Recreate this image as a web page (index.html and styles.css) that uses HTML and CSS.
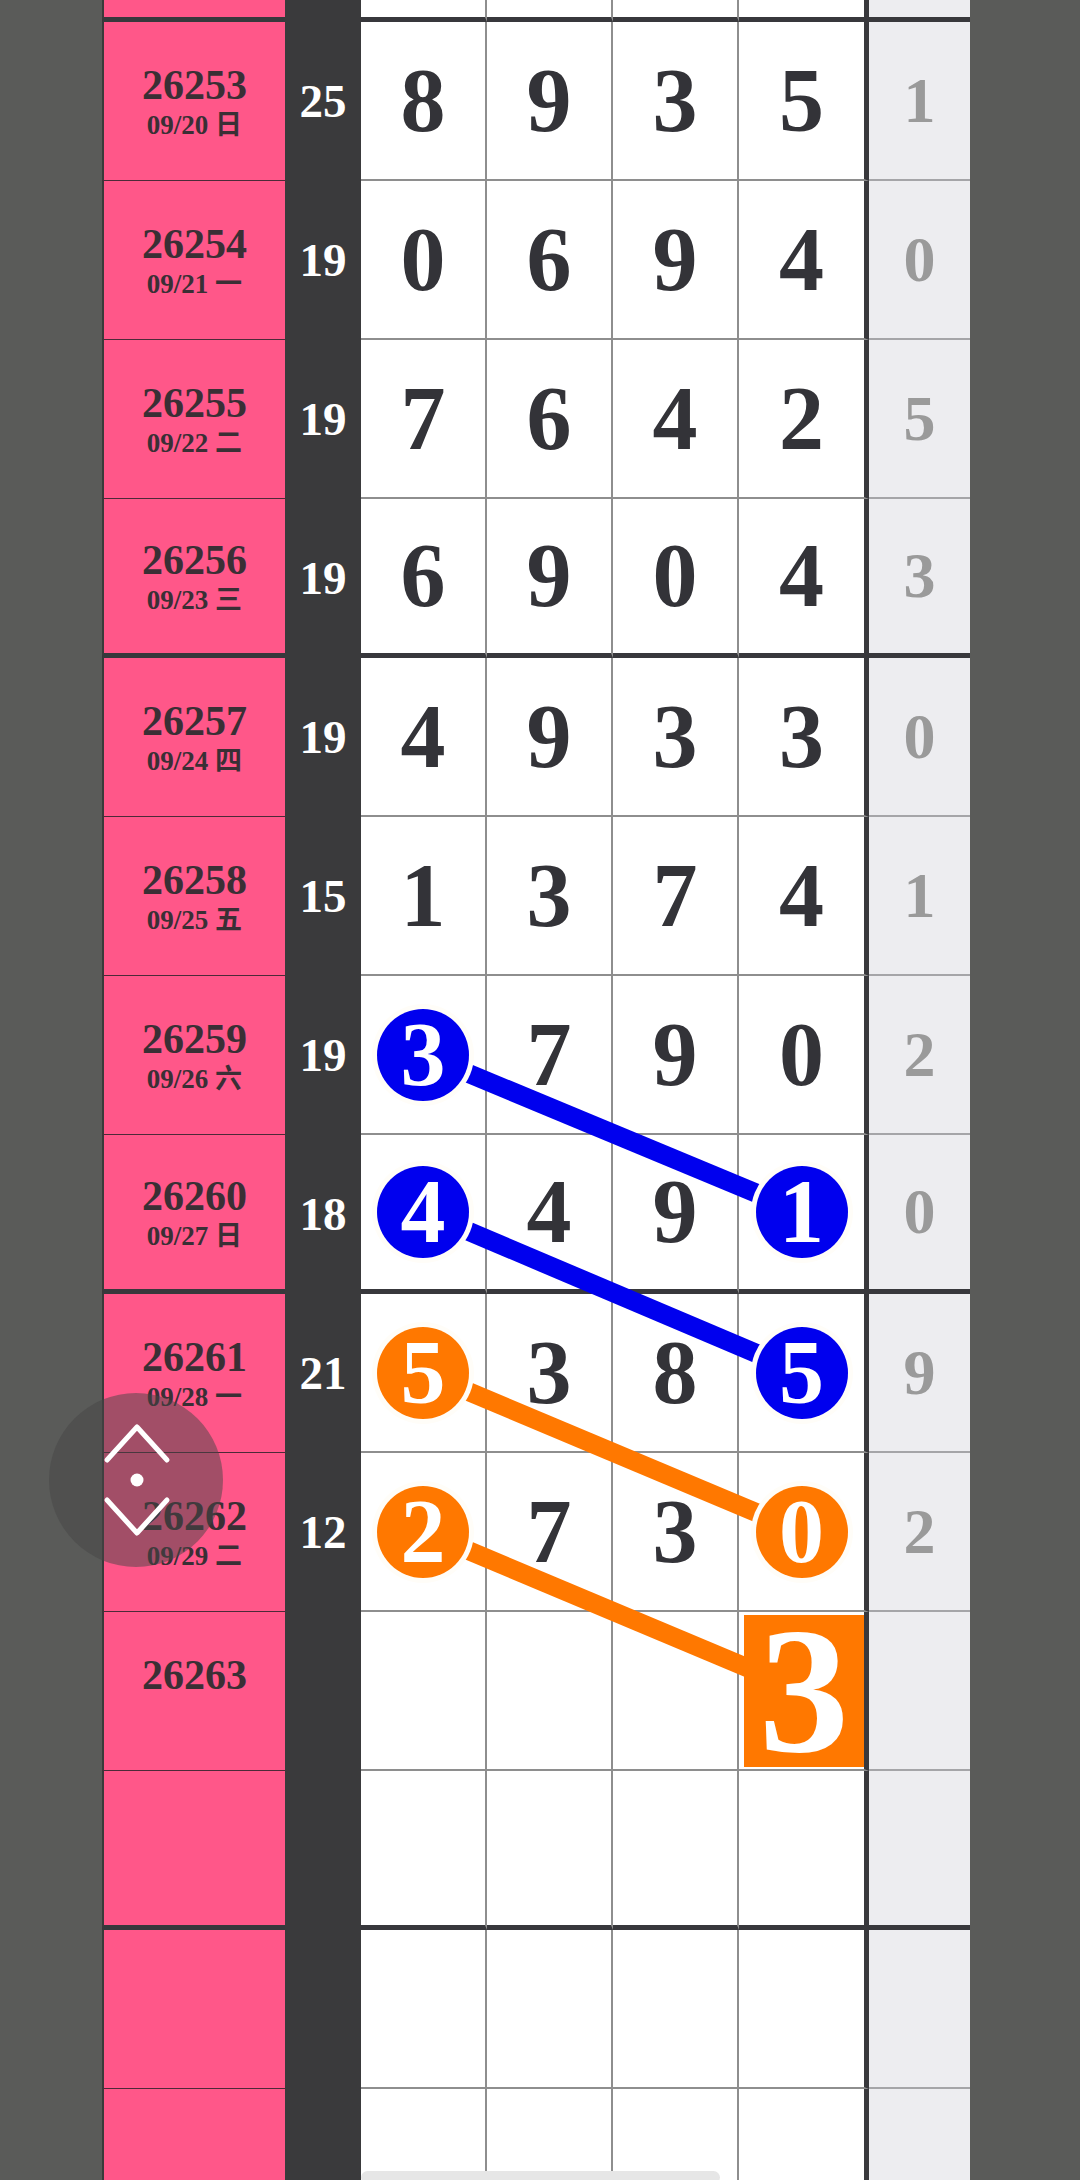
FILE: index.html
```html
<!DOCTYPE html>
<html lang="zh">
<head>
    <meta charset="UTF-8">
    <meta name="viewport" content="width=device-width, initial-scale=1.0">
    <title>走勢表</title>
    <link rel="stylesheet" href="styles.css">
</head>
<body>

<div class="board">
    <div class="row stub end">
        <div class="issue"></div><div class="sum"></div>
        <div class="num"></div><div class="num"></div><div class="num"></div><div class="num"></div>
        <div class="tail"></div>
    </div>

    <div class="row">
        <div class="issue"><b>26253</b><span>09/20 日</span></div><div class="sum">25</div>
        <div class="num">8</div><div class="num">9</div><div class="num">3</div><div class="num">5</div>
        <div class="tail">1</div>
    </div>
    <div class="row">
        <div class="issue"><b>26254</b><span>09/21 一</span></div><div class="sum">19</div>
        <div class="num">0</div><div class="num">6</div><div class="num">9</div><div class="num">4</div>
        <div class="tail">0</div>
    </div>
    <div class="row">
        <div class="issue"><b>26255</b><span>09/22 二</span></div><div class="sum">19</div>
        <div class="num">7</div><div class="num">6</div><div class="num">4</div><div class="num">2</div>
        <div class="tail">5</div>
    </div>
    <div class="row end">
        <div class="issue"><b>26256</b><span>09/23 三</span></div><div class="sum">19</div>
        <div class="num">6</div><div class="num">9</div><div class="num">0</div><div class="num">4</div>
        <div class="tail">3</div>
    </div>

    <div class="row">
        <div class="issue"><b>26257</b><span>09/24 四</span></div><div class="sum">19</div>
        <div class="num">4</div><div class="num">9</div><div class="num">3</div><div class="num">3</div>
        <div class="tail">0</div>
    </div>
    <div class="row">
        <div class="issue"><b>26258</b><span>09/25 五</span></div><div class="sum">15</div>
        <div class="num">1</div><div class="num">3</div><div class="num">7</div><div class="num">4</div>
        <div class="tail">1</div>
    </div>
    <div class="row">
        <div class="issue"><b>26259</b><span>09/26 六</span></div><div class="sum">19</div>
        <div class="num"><span class="ball blue">3</span></div><div class="num">7</div><div class="num">9</div><div class="num">0</div>
        <div class="tail">2</div>
    </div>
    <div class="row end">
        <div class="issue"><b>26260</b><span>09/27 日</span></div><div class="sum">18</div>
        <div class="num"><span class="ball blue">4</span></div><div class="num">4</div><div class="num">9</div><div class="num"><span class="ball blue">1</span></div>
        <div class="tail">0</div>
    </div>

    <div class="row">
        <div class="issue"><b>26261</b><span>09/28 一</span></div><div class="sum">21</div>
        <div class="num"><span class="ball orange">5</span></div><div class="num">3</div><div class="num">8</div><div class="num"><span class="ball blue">5</span></div>
        <div class="tail">9</div>
    </div>
    <div class="row">
        <div class="issue"><b>26262</b><span>09/29 二</span></div><div class="sum">12</div>
        <div class="num"><span class="ball orange">2</span></div><div class="num">7</div><div class="num">3</div><div class="num"><span class="ball orange">0</span></div>
        <div class="tail">2</div>
    </div>
    <div class="row">
        <div class="issue"><b>26263</b><span>&nbsp;</span></div><div class="sum"></div>
        <div class="num"></div><div class="num"></div><div class="num"></div><div class="num hit"><span class="square">3</span></div>
        <div class="tail"></div>
    </div>
    <div class="row end">
        <div class="issue"></div><div class="sum"></div>
        <div class="num"></div><div class="num"></div><div class="num"></div><div class="num"></div>
        <div class="tail"></div>
    </div>

    <div class="row">
        <div class="issue"></div><div class="sum"></div>
        <div class="num"></div><div class="num"></div><div class="num"></div><div class="num"></div>
        <div class="tail"></div>
    </div>
    <div class="row">
        <div class="issue"></div><div class="sum"></div>
        <div class="num"></div><div class="num"></div><div class="num"></div><div class="num"></div>
        <div class="tail"></div>
    </div>

    <!-- connecting lines between repeated numbers -->
    <svg class="links" width="868" height="2180" viewBox="0 0 868 2180">
        <line x1="321" y1="1054.5" x2="699.5" y2="1212" stroke="#0000ee" stroke-width="19"/>
        <line x1="321" y1="1212" x2="699.5" y2="1372.5" stroke="#0000ee" stroke-width="19"/>
        <line x1="321" y1="1372.5" x2="699.5" y2="1531.5" stroke="#ff7800" stroke-width="19"/>
        <line x1="321" y1="1531.5" x2="699.5" y2="1690.5" stroke="#ff7800" stroke-width="19"/>
    </svg>
</div>

<div class="jump">
    <svg width="174" height="174" viewBox="0 0 174 174">
        <polyline points="58,67 88,34 118,67" fill="none" stroke="#fff" stroke-width="5" stroke-linecap="round" stroke-linejoin="round"/>
        <circle cx="88" cy="87" r="6.5" fill="#fff"/>
        <polyline points="58,107 88,140 118,107" fill="none" stroke="#fff" stroke-width="5" stroke-linecap="round" stroke-linejoin="round"/>
    </svg>
</div>

<div class="hscroll"></div>

</body>
</html>
```

FILE: styles.css
```css
body {
    margin: 0;
    background-color: #5a5b59;
    font-family: "Liberation Serif", "Noto Sans CJK SC", serif;
}
.board {
    position: relative;
    width: 868px;
    height: 2180px;
    margin-left: 102px;
    overflow: hidden;
}
.row {
    display: grid;
    grid-template-columns: 183px 76px 126px 126px 126px 130px 101px;
    grid-template-rows: 100%;
    height: 159px;
}
.row > div {
    box-sizing: border-box;
    min-height: 0;
}
.row.stub {
    height: 22px;
}
.issue {
    background-color: #ff5789;
    border-left: 2px solid #3a3a3a;
    border-bottom: 1px solid #4d2a38;
    display: flex;
    flex-direction: column;
    align-items: center;
    justify-content: center;
    color: #3a2f35;
    font-weight: bold;
}
.issue b {
    font-size: 42px;
    line-height: 42px;
}
.issue span {
    font-size: 27px;
    line-height: 28px;
    margin-top: 5px;
}
.sum {
    background-color: #3a3a3c;
    color: #fff;
    font-weight: bold;
    font-size: 47px;
    line-height: 1;
    display: flex;
    align-items: center;
    justify-content: center;
}
.num {
    background-color: #fff;
    border-right: 2px solid #8e8e8e;
    border-bottom: 2px solid #8e8e8e;
    display: flex;
    align-items: center;
    justify-content: center;
    color: #333338;
    font-size: 90px;
    font-weight: bold;
    line-height: 1;
}
.row > .num:nth-child(6) {
    border-right: 5px solid #38383c;
}
.tail {
    background-color: #ededf0;
    border-bottom: 2px solid #a5a5a8;
    display: flex;
    align-items: center;
    justify-content: center;
    color: #9a9a9a;
    font-size: 64px;
    font-weight: bold;
    line-height: 1;
}
.row.end .issue,
.row.end .num,
.row.end .tail {
    border-bottom: 5px solid #38383c;
}
.ball {
    position: relative;
    z-index: 2;
    width: 92px;
    height: 92px;
    border-radius: 50%;
    color: #fff;
    display: flex;
    align-items: center;
    justify-content: center;
    box-shadow: 0 0 0 5px #fffdf8;
}
.ball.blue {
    background-color: #0000ee;
}
.ball.orange {
    background-color: #ff7800;
}
.num.hit {
    padding: 3px 0 2px 5px;
    align-items: stretch;
    justify-content: stretch;
}
.square {
    flex: 1;
    position: relative;
    z-index: 2;
    background-color: #ff7800;
    color: #fff;
    font-size: 180px;
    line-height: 140px;
    display: flex;
    align-items: center;
    justify-content: center;
}
.links {
    position: absolute;
    left: 0;
    top: 0;
    z-index: 1;
    pointer-events: none;
}
.jump {
    position: fixed;
    left: 49px;
    top: 1393px;
    z-index: 5;
    width: 174px;
    height: 174px;
    border-radius: 50%;
    background-color: rgba(70, 70, 70, 0.5);
}
.jump svg {
    display: block;
}
.hscroll {
    position: fixed;
    left: 361px;
    bottom: -4px;
    width: 359px;
    height: 13px;
    border-radius: 7px;
    background-color: #e6e6e6;
    z-index: 4;
}
```
